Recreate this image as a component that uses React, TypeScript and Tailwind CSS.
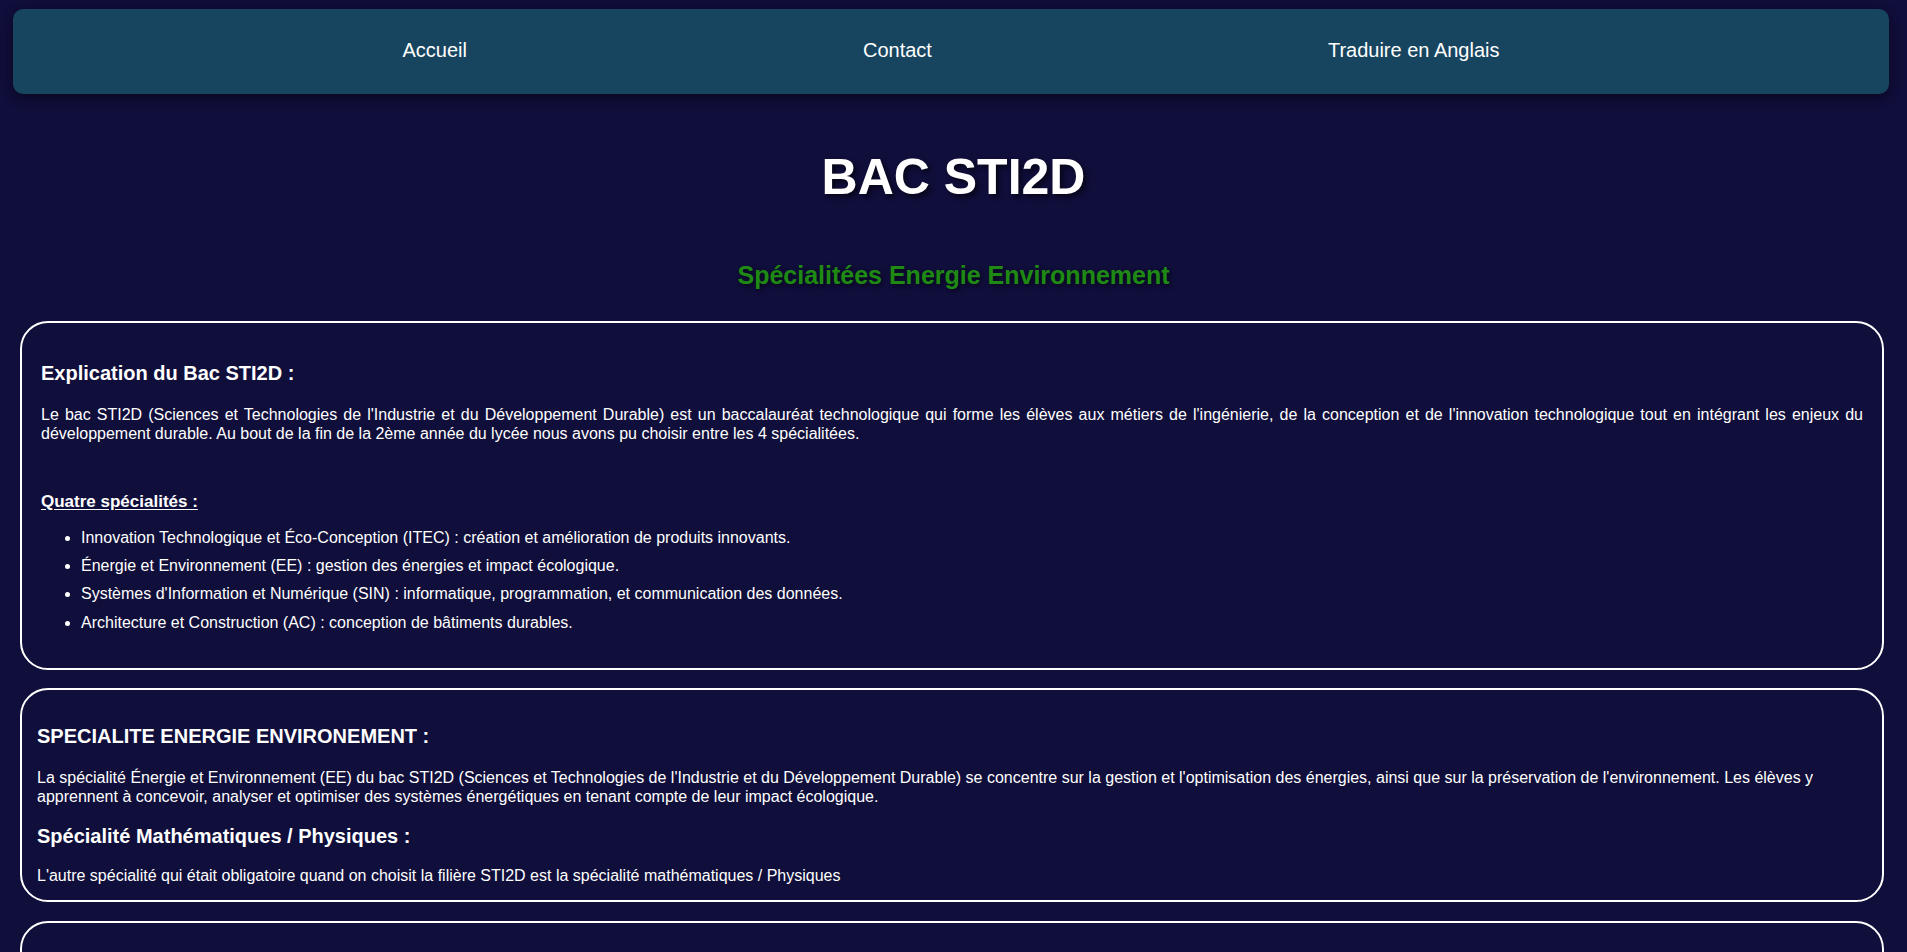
import React from "react";

const items = [
  "Innovation Technologique et Éco-Conception (ITEC) : création et amélioration de produits innovants.",
  "Énergie et Environnement (EE) : gestion des énergies et impact écologique.",
  "Systèmes d'Information et Numérique (SIN) : informatique, programmation, et communication des données.",
  "Architecture et Construction (AC) : conception de bâtiments durables.",
];

export default function App() {
  return (
    <div className="min-h-screen bg-[#100e3b] font-['Liberation_Sans',Arial,sans-serif] text-white pt-[9px] pb-[40px]">
      <nav className="ml-[13px] mr-[18px] h-[85px] pb-[3px] rounded-[10px] bg-[#17455f] shadow-[0_4px_12px_rgba(0,0,0,0.45)] flex items-center justify-center gap-[396px] text-[20px]">
        <a className="text-white" href="#">Accueil</a>
        <a className="text-white" href="#">Contact</a>
        <a className="text-white" href="#">Traduire en Anglais</a>
      </nav>

      <h1 className="mt-[55px] text-center text-[50px] font-bold leading-[1.15] [text-shadow:3px_3px_5px_rgba(0,0,0,0.6)]">
        BAC STI2D
      </h1>
      <h2 className="mt-[54px] mb-[32px] text-center text-[25px] font-bold leading-[1.15] text-[#1f8a13] [text-shadow:2px_2px_4px_rgba(0,0,0,0.6)]">
        Spécialitées Energie Environnement
      </h2>

      <section className="ml-[20px] mr-[23px] rounded-[28px] border-2 border-white px-[19px] pt-[20px] pb-[20px]">
        <h3 className="mt-[19px] mb-[21px] text-[20px] font-bold leading-[1.15]">Explication du Bac STI2D :</h3>
        <p className="mb-4 text-justify text-[16px] leading-[1.15]">
          Le bac STI2D (Sciences et Technologies de l'Industrie et du Développement Durable) est un baccalauréat technologique qui forme les élèves aux métiers de l'ingénierie, de la conception et de l'innovation technologique tout en intégrant les enjeux du développement durable. Au bout de la fin de la 2ème année du lycée nous avons pu choisir entre les 4 spécialitées.
        </p>
        <p className="mt-[49px] text-[17px] font-bold leading-[1.15] underline underline-offset-2">Quatre spécialités :</p>
        <ul className="mt-[17px] mb-4 list-disc pl-[40px] text-[16px] leading-[1.15]">
          {items.map((t) => (
            <li key={t} className="mb-[10px]">{t}</li>
          ))}
        </ul>
      </section>

      <section className="mt-[18px] ml-[20px] mr-[23px] rounded-[28px] border-2 border-white px-[15px] pt-[15px] pb-[15px]">
        <h3 className="mt-[20px] mb-[21px] text-[20px] font-bold leading-[1.15]">SPECIALITE ENERGIE ENVIRONEMENT :</h3>
        <p className="text-[16px] leading-[1.15]">
          La spécialité Énergie et Environnement (EE) du bac STI2D (Sciences et Technologies de l'Industrie et du Développement Durable) se concentre sur la gestion et l'optimisation des énergies, ainsi que sur la préservation de l'environnement. Les élèves y apprennent à concevoir, analyser et optimiser des systèmes énergétiques en tenant compte de leur impact écologique.
        </p>
        <h3 className="mt-[19px] mb-[19px] text-[20px] font-bold leading-[1.15]">Spécialité Mathématiques / Physiques :</h3>
        <p className="text-[16px] leading-[1.15]">
          L'autre spécialité qui était obligatoire quand on choisit la filière STI2D est la spécialité mathématiques / Physiques
        </p>
      </section>

      <section className="mt-[19px] ml-[20px] mr-[23px] rounded-[28px] border-2 border-white px-[15px] pt-[15px] pb-[14px]">
        <h3 className="mt-[20px] mb-[20px] text-[20px] font-bold leading-[1.15]">Mes projets :</h3>
        <p className="text-[16px] leading-[1.15]">
          Au cours de ces deux années, nous avons réalisé plusieurs projets en lien avec l'énergie et l'environnement.
        </p>
      </section>
    </div>
  );
}
